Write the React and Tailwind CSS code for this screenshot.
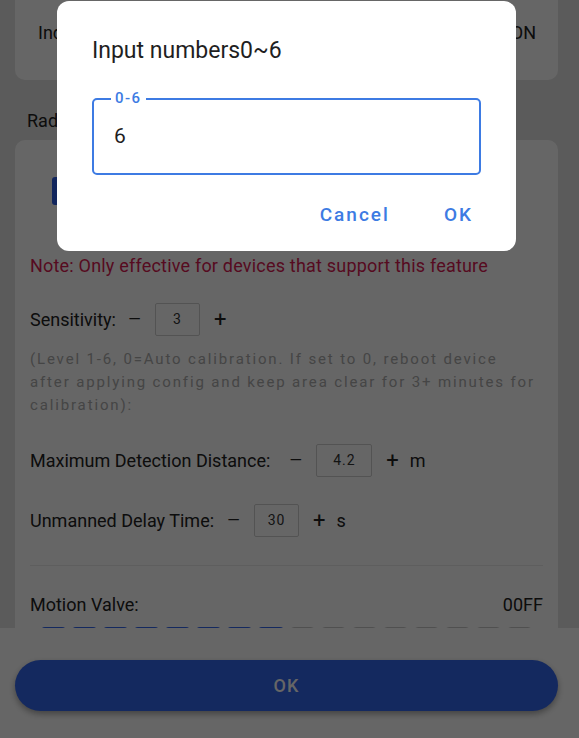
import React from 'react';

const font = { fontFamily: 'Roboto, "Noto Sans", Arial, sans-serif' };

const Stepper = ({ label, value, unit, boxClass = "w-[45px]", gapLabel = "ml-[12px]" }) => (
  <div className="flex items-center h-[33px] text-[18px] text-[#222]">
    <span>{label}</span>
    <span className={`${gapLabel} w-[13px] flex justify-center text-[16px] leading-none`}>—</span>
    <div className={`ml-[14px] h-[33px] ${boxClass} border border-[#cfcfcf] rounded-[2px] flex items-center justify-center text-[14px] tracking-[1px] text-[#333]`}>
      {value}
    </div>
    <span className="ml-[14px] text-[22px] leading-none">+</span>
    {unit && <span className="ml-[11px] text-[18px]">{unit}</span>}
  </div>
);

export default function App() {
  const segments = Array.from({ length: 16 }, (_, i) => i < 8);

  return (
    <div className="relative h-screen overflow-hidden bg-[#e4e4e4]" style={font}>
      {/* page content (scrolled) */}
      <div className="pl-[15px] pr-[21px] -mt-4">
        <div className="h-[96px] bg-white rounded-[10px] flex items-center justify-between pl-[23px] pr-[22px] text-[18px] text-[#222]">
          <span>Indicator Light</span>
          <span>ON</span>
        </div>

        <div className="mt-[28px] pl-[12px] h-[24px] flex items-center text-[18px] text-[#222]">
          Radar Settings
        </div>

        <div className="mt-[8px] bg-white rounded-[10px] px-[15px] pt-[37px] pb-[40px]">
          <div className="flex gap-2 pl-[22px]">
            <button className="h-[28px] w-[120px] rounded-[3px] bg-[#2f5fe8] text-white text-[15px]">Basic</button>
            <button className="h-[28px] w-[120px] rounded-[3px] border border-[#2f5fe8] text-[#2f5fe8] text-[15px]">Advanced</button>
          </div>

          <p className="mt-[49px] text-[18px] leading-[24px] tracking-[0.2px] text-[#d81a52]">
            Note: Only effective for devices that support this feature
          </p>

          <div className="mt-[25px]">
            <Stepper label="Sensitivity:" value="3" />
          </div>

          <p className="mt-[12px] text-[15px] leading-[23px] tracking-[1.85px] text-[#adadad]">
            (Level 1-6, 0=Auto calibration. If set to 0, reboot device after applying config and keep area clear for 3+ minutes for calibration):
          </p>

          <div className="mt-[27px]">
            <Stepper label="Maximum Detection Distance:" value="4.2" unit="m" boxClass="w-[56px]" gapLabel="ml-[19px]" />
          </div>

          <div className="mt-[27px]">
            <Stepper label="Unmanned Delay Time:" value="30" unit="s" gapLabel="ml-[13px]" />
          </div>

          <div className="mt-[28px] h-px bg-[#ececec]" />

          <div className="mt-[26px] flex items-center justify-between h-[24px] text-[18px] text-[#222]">
            <span>Motion Valve:</span>
            <span>00FF</span>
          </div>

          <div className="mt-[11px] mx-[11px] grid grid-cols-16 gap-[6px]">
            {segments.map((on, i) => (
              <div
                key={i}
                className={`h-[26px] rounded-[4px] ${on ? "bg-[#3366ee]" : "border border-[#c9c9c9] bg-white"}`}
              />
            ))}
          </div>
        </div>
      </div>

      {/* bottom bar */}
      <div className="fixed bottom-0 inset-x-0 h-[110px] bg-white pl-[15px] pr-[21px] pt-[32px] z-10">
        <button className="w-full h-[51px] rounded-full bg-[#3366ee] text-white text-[18px] font-medium tracking-[1px] shadow-[0_3px_6px_rgba(0,0,0,0.35)]">
          OK
        </button>
      </div>

      {/* scrim */}
      <div className="fixed inset-0 bg-black/60 z-20" />

      {/* dialog */}
      <div className="fixed left-[57px] top-[1px] w-[459px] h-[250px] bg-white rounded-[12px] z-30 pt-[36px] px-[35px]">
        <h2 className="text-[23px] leading-[28px] text-[#1f1f1f]">Input numbers0~6</h2>
        <div className="relative mt-[33px] h-[77px] border-2 border-[#3d7be3] rounded-[5px] flex items-center pl-[20px]">
          <span className="absolute -top-[12px] left-[17px] px-[4px] bg-white text-[15px] leading-[20px] font-medium tracking-[1.5px] text-[#3d7be3]">
            0-6
          </span>
          <span className="text-[21px] text-[#1f1f1f]">6</span>
        </div>
        <div className="mt-[26px] flex justify-end items-center pr-[8px] gap-[54px] text-[19px] font-medium tracking-[2px] text-[#3d7be3]">
          <button>Cancel</button>
          <button>OK</button>
        </div>
      </div>
    </div>
  );
}
